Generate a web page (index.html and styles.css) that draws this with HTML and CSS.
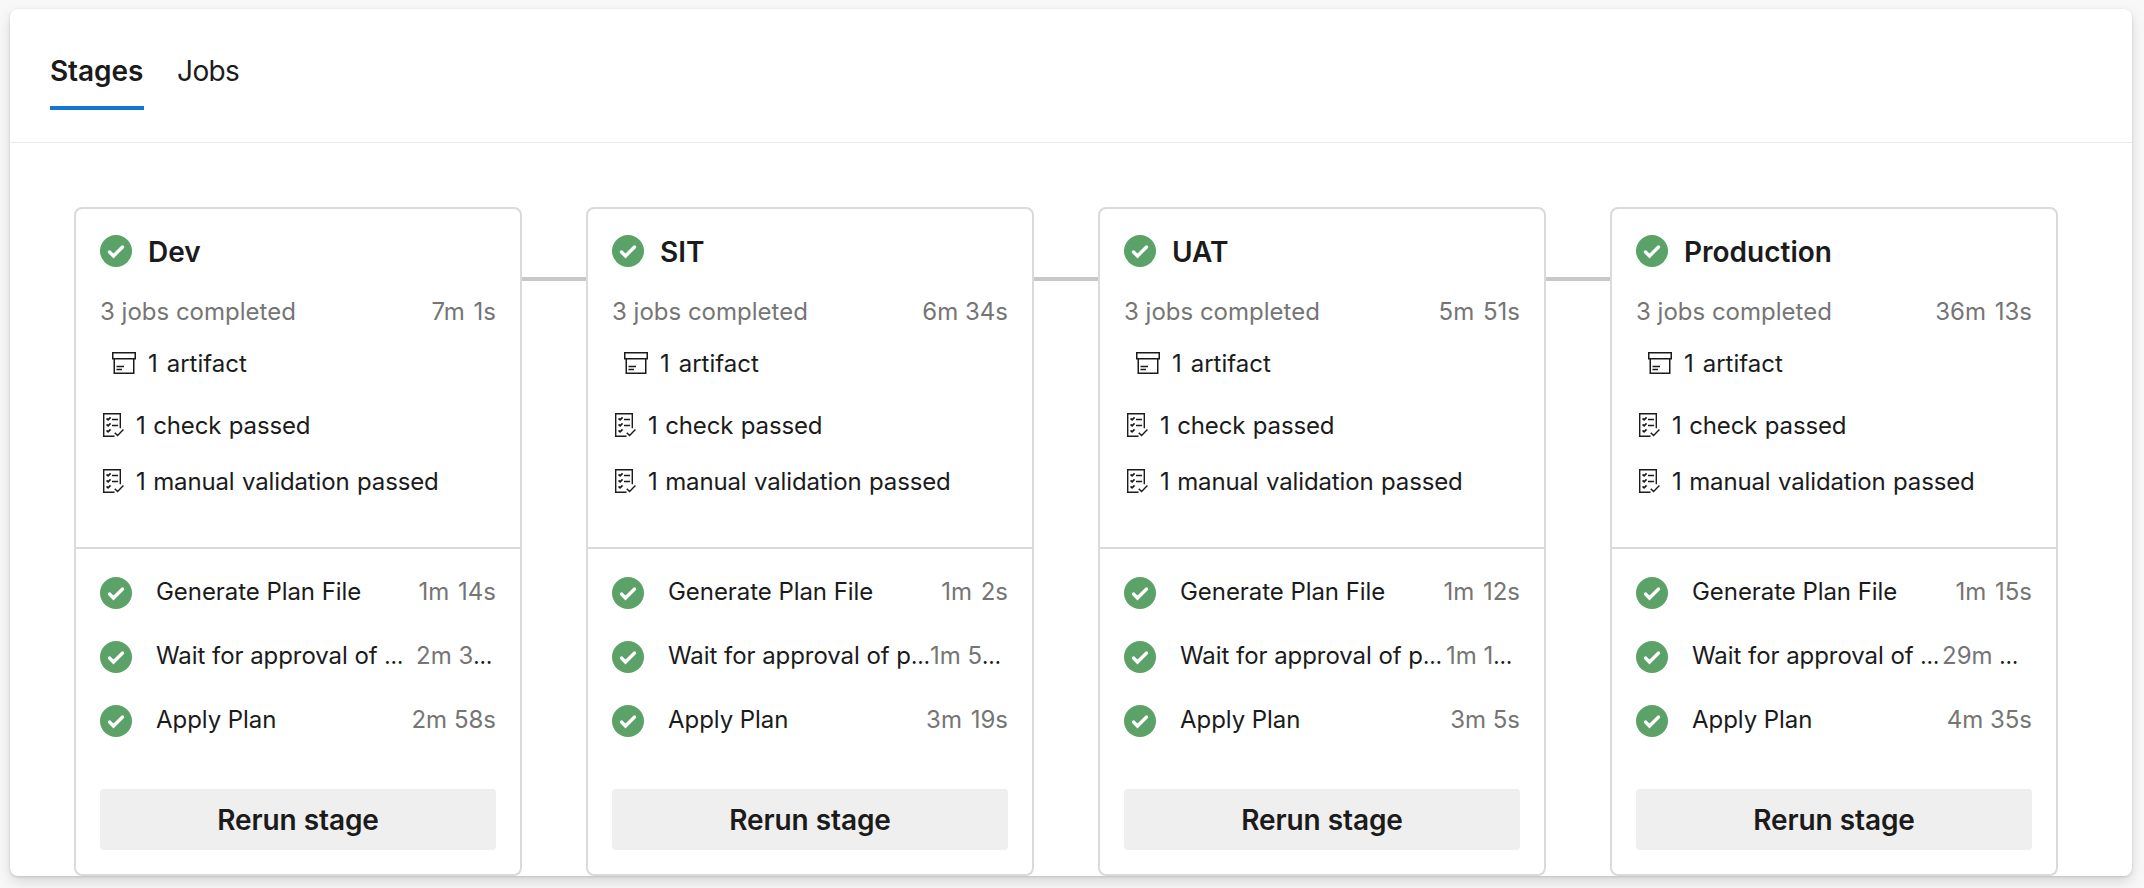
FILE: index.html
```html
<!DOCTYPE html>
<html lang="en">
<head>
<meta charset="utf-8">
<title>Stages</title>
<link rel="stylesheet" href="styles.css">
</head>
<body>
<svg class="sprite" aria-hidden="true">
  <symbol id="ok" viewBox="0 0 32 32"><circle cx="16" cy="16" r="16" fill="#5aa267"/><path d="M9.500 17l4 4L22.500 12" fill="none" stroke="#fff" stroke-width="3.4" stroke-linecap="round" stroke-linejoin="miter"/></symbol>
  <symbol id="box" viewBox="0 0 24 22"><path d="M.75.75h22.500v6H.75zM2.250 6.750v14.500h19.500v-14.500M4.500 14.500h7.500M4.500 17.500h5.500" fill="none" stroke="#1b1b1b" stroke-width="1.5"/></symbol>
  <symbol id="list" viewBox="0 0 21 24"><path d="M11.500 23.300H.7V.7h16.600v14.600M9 6.500h6M9 12.500h6M11.700 19.700l2.900 2.900 5.800-6" fill="none" stroke="#1b1b1b" stroke-width="1.4"/><path d="M3.600 5.300l1.500 1.500 2.500-2.500M3.600 11.300l1.500 1.500 2.500-2.500M3.600 17.300l1.500 1.500 2.500-2.500" fill="none" stroke="#1b1b1b" stroke-width="1.7"/></symbol>
</svg>
<main class="panel">
  <nav class="tabs"><a class="tab active">Stages</a><a class="tab">Jobs</a></nav>
  <div class="stages" id="stages"></div>
</main>
<script src="stages.js"></script>
</body>
</html>
```
FILE: styles.css
```css
* { box-sizing: border-box; }
body { margin: 0; height: 888px; padding: 9px 12px 12px 10px; overflow: hidden; background: #f8f8f8; color: #1b1b1b; font-family: Inter, "Liberation Sans", sans-serif; font-size: 24px; }
.sprite { display: none; }
.panel { height: 867px; background: #fff; border-radius: 8px; box-shadow: 0 6px 14px rgba(0,0,0,.13), 0 1px 3px rgba(0,0,0,.14); }
.tabs { display: flex; gap: 33px; height: 134px; padding: 41px 40px 0; border-bottom: 1px solid #eaeaea; }
.tab { height: 60px; line-height: 42px; font-size: 28px; letter-spacing: -.6px; white-space: nowrap; }
.tab.active { width: 94px; font-weight: 600; letter-spacing: -.1px; border-bottom: 4px solid #1378d4; }
.stages { display: flex; padding: 64px 64px 0; }
.connector { width: 64px; height: 4px; margin-top: 70px; background: #c8c8c8; }
.card { width: 448px; height: 669px; border: 2px solid #dadada; border-radius: 8px; }
.summary { height: 340px; padding: 26px 24px 0; border-bottom: 2px solid #dadada; }
.title { display: flex; align-items: center; height: 32px; margin: 0; font-size: 28px; font-weight: 600; }
.title span { padding-top: 2px; }
.ok { flex: none; width: 32px; height: 32px; }
.title .ok { margin-right: 16px; }
.row { display: flex; align-items: center; height: 32px; white-space: nowrap; }
.totals { justify-content: space-between; margin-top: 28px; color: #757575; }
.artifact { margin-top: 20px; padding-left: 12px; word-spacing: 2.2px; }
.artifact svg { width: 24px; height: 22px; margin-right: 12px; }
.check { margin-top: 30px; padding-left: 3px; letter-spacing: -.15px; word-spacing: 1px; }
.check + .check { margin-top: 24px; }
.check svg { width: 21px; height: 24px; margin-right: 12px; }
.jobs { padding: 28px 24px 0; }
.job { display: flex; align-items: center; height: 32px; margin-bottom: 32px; white-space: nowrap; }
.job span { padding-bottom: 3px; }
.job .name { flex: 1; margin-left: 24px; letter-spacing: -.06px; }
.time { color: #757575; }
.time.one { word-spacing: 2px; }
.job .more { padding: 0; color: #1b1b1b; font-size: 22px; }
.name .more { letter-spacing: 0; }
.rerun { display: block; width: 100%; height: 61px; margin-top: 52px; padding: 0; border: 0; border-radius: 4px; background: #efefef; color: inherit; font: 600 28px Inter, sans-serif; letter-spacing: -.08px; }
```
FILE: stages.js
```js
const stages = [
  { name: "Dev", total: "7m 1s", plan: "1m 14s", wait: ["Wait for approval of ", "2m 3", 80], apply: "2m 58s" },
  { name: "SIT", total: "6m 34s", plan: "1m 2s", wait: ["Wait for approval of p", "1m 5", 79], apply: "3m 19s" },
  { name: "UAT", total: "5m 51s", plan: "1m 12s", wait: ["Wait for approval of p", "1m 1", 74], apply: "3m 5s" },
  { name: "Production", total: "36m 13s", plan: "1m 15s", wait: ["Wait for approval of ", "29m ", 90], apply: "4m 35s" },
];
const ok = '<svg class="ok"><use href="#ok"/></svg>';
const more = '<span class="more">…</span>';
const time = t => `<span class="time${t.includes("1") ? " one" : ""}">${t}</span>`;
const job = (name, t) => `<div class="job">${ok}<span class="name">${name}</span>${time(t)}</div>`;
document.getElementById("stages").innerHTML = stages.map(s => `<section class="card">
  <div class="summary">
    <h2 class="title">${ok}<span>${s.name}</span></h2>
    <div class="row totals"><span class="done">3 jobs completed</span>${time(s.total)}</div>
    <div class="row artifact"><svg><use href="#box"/></svg><span>1 artifact</span></div>
    <div class="row check"><svg><use href="#list"/></svg><span>1 check passed</span></div>
    <div class="row check"><svg><use href="#list"/></svg><span>1 manual validation passed</span></div>
  </div>
  <div class="jobs">
    ${job("Generate Plan File", s.plan)}
    <div class="job">${ok}<span class="name">${s.wait[0]}${more}</span><span class="time" style="width:${s.wait[2]}px">${s.wait[1]}${more}</span></div>
    ${job("Apply Plan", s.apply)}
    <button class="rerun">Rerun stage</button>
  </div>
</section>`).join('<div class="connector"></div>');
```
